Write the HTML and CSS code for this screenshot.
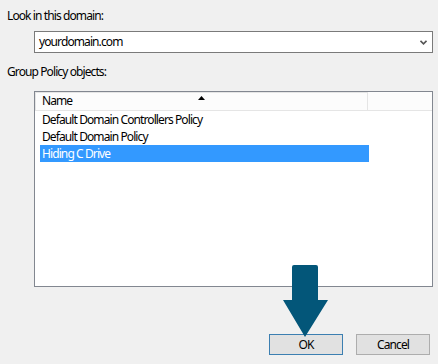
FILE: index.html
```html
<!DOCTYPE html>
<html>
<head>
<meta charset="utf-8">
<link rel="stylesheet" href="styles.css">
</head>
<body>
<div class="dialog">
  <div class="label first">Look in this domain:</div>
  <div class="combo">
    <span class="combo-text">yourdomain.com</span>
    <svg class="chev" width="7" height="5" viewBox="0 0 7 5"><path d="M0.5 0.8 L3.5 3.8 L6.5 0.8" fill="none" stroke="#555" stroke-width="1.6"/></svg>
  </div>
  <div class="label second">Group Policy objects:</div>
  <div class="listview">
    <div class="header">
      <div class="hcell">Name
        <svg class="sort" width="7" height="4" viewBox="0 0 7 4"><path d="M3.5 0 L7 4 L0 4 Z" fill="#000"/></svg>
      </div>
      <div class="hfill"></div>
    </div>
    <div class="rows">
      <div class="row">Default Domain Controllers Policy</div>
      <div class="row">Default Domain Policy</div>
      <div class="row selected">Hiding C Drive</div>
    </div>
  </div>
  <div class="buttons">
    <button class="btn default">OK</button>
    <button class="btn">Cancel</button>
  </div>
  <svg class="arrow" width="48" height="75" viewBox="0 0 48 75">
    <path d="M10 3 Q10 1 12 1 L34 1 Q36 1 36 3 L36 36 L46 36 L23 73 L1 36 L10 36 Z" fill="#035679"/>
  </svg>
</div>
</body>
</html>
```
FILE: styles.css
```css
html, body {
  margin: 0;
  padding: 0;
  background: #f0f0f0;
}
body {
  font-family: "Noto Sans", "Open Sans", sans-serif;
  font-size: 12px;
  letter-spacing: -0.9px;
  color: #000;
  width: 438px;
  height: 364px;
  overflow: hidden;
}
.dialog {
  position: relative;
  display: flex;
  flex-direction: column;
  height: 364px;
  padding: 8px 0 0 0;
  box-sizing: border-box;
}
.label {
  line-height: 16px;
  height: 16px;
  padding-left: 7px;
}
.combo {
  margin: 7px 0 0 34px;
  width: 399px;
  height: 22px;
  box-sizing: border-box;
  border: 1px solid #7a7a7a;
  background: #fff;
  display: flex;
  align-items: center;
  justify-content: space-between;
  padding: 0 5px 0 4px;
}
.combo-text {
  line-height: 16px;
}
.chev {
  display: block;
}
.label.second {
  margin-top: 11px;
}
.listview {
  margin: 11px 0 0 34px;
  width: 399px;
  height: 196px;
  box-sizing: border-box;
  border: 1px solid #828790;
  background: #fff;
}
.header {
  display: flex;
  height: 18px;
  background: #fcfcfc;
  border-bottom: 1px solid #e5e5e5;
}
.hcell {
  position: relative;
  width: 333px;
  box-sizing: border-box;
  border: 1px solid #e5e5e5;
  border-bottom: none;
  padding-left: 6px;
  line-height: 16px;
}
.sort {
  position: absolute;
  left: 162px;
  top: 3px;
}
.hfill {
  flex: 1;
}
.rows {
  display: flex;
  flex-direction: column;
  padding-left: 5px;
}
.row {
  width: 329px;
  height: 17px;
  line-height: 17px;
  padding-left: 2px;
  box-sizing: border-box;
  white-space: nowrap;
}
.row.selected {
  background: #3399ff;
  color: #fff;
}
.buttons {
  display: flex;
  justify-content: flex-end;
  gap: 13px;
  margin-top: 47px;
  padding-right: 8px;
}
.btn {
  width: 74px;
  height: 21px;
  box-sizing: border-box;
  border: 1px solid #adadad;
  background: #e1e1e1;
  font-family: inherit;
  font-size: 12px;
  letter-spacing: inherit;
  color: #000;
  padding: 0;
  line-height: 18px;
}
.btn.default {
  border-color: #3c7fb1;
}
.arrow {
  position: absolute;
  left: 282px;
  top: 264px;
}
```
